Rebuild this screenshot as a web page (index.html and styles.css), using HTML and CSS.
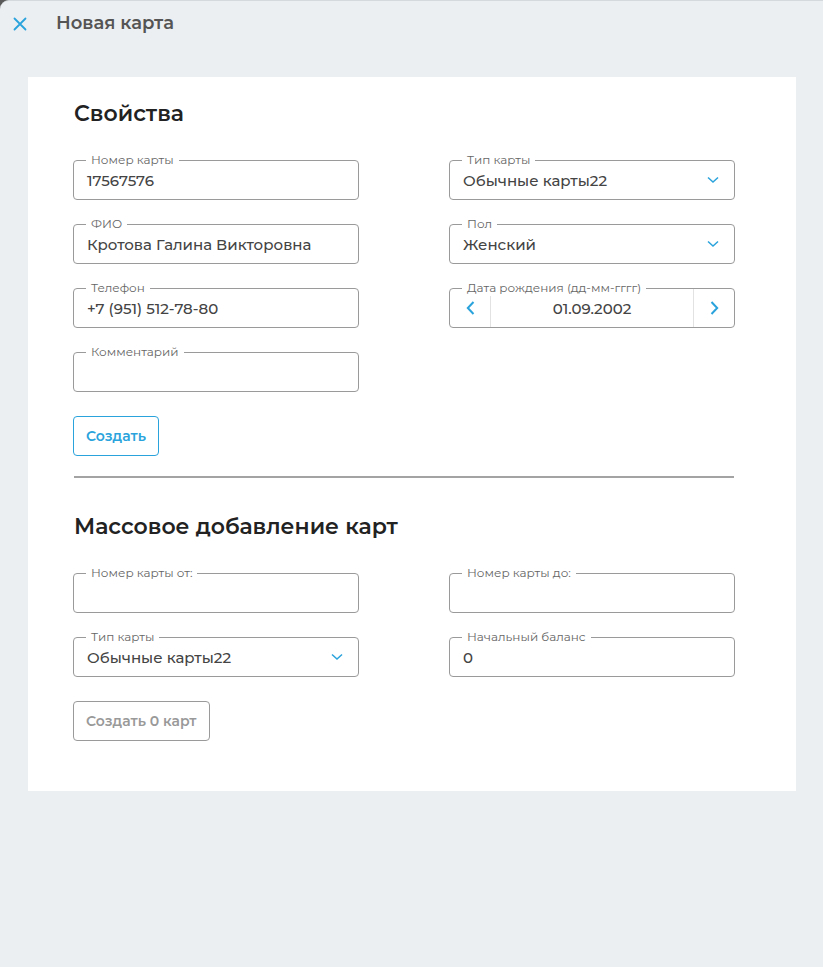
FILE: index.html
```html
<!DOCTYPE html>
<html lang="ru">
<head>
<meta charset="utf-8">
<title>Новая карта</title>
<link rel="stylesheet" href="styles.css">
</head>
<body>
<div class="window">
  <header class="topbar">
    <button class="close" aria-label="Закрыть">
      <svg width="14" height="14" viewBox="0 0 14 14"><path d="M1.5 1.5 L12.5 12.5 M12.5 1.5 L1.5 12.5" stroke="#2aa3dc" stroke-width="1.8" fill="none" stroke-linecap="round"/></svg>
    </button>
    <h1 class="title">Новая карта</h1>
  </header>
  <main class="card">
    <section class="section">
      <h2 class="heading">Свойства</h2>
      <div class="grid">
        <div class="col">
          <div class="field"><span class="label">Номер карты</span><span class="value">17567576</span></div>
          <div class="field"><span class="label">ФИО</span><span class="value">Кротова Галина Викторовна</span></div>
          <div class="field"><span class="label">Телефон</span><span class="value">+7 (951) 512-78-80</span></div>
          <div class="field"><span class="label">Комментарий</span><span class="value"></span></div>
        </div>
        <div class="col">
          <div class="field select"><span class="label">Тип карты</span><span class="value">Обычные карты22</span>
            <svg class="chev" width="12" height="8" viewBox="0 0 12 8"><path d="M1 1.5 L6 6 L11 1.5" stroke="#2aa3dc" stroke-width="1.5" fill="none"/></svg></div>
          <div class="field select"><span class="label">Пол</span><span class="value">Женский</span>
            <svg class="chev" width="12" height="8" viewBox="0 0 12 8"><path d="M1 1.5 L6 6 L11 1.5" stroke="#2aa3dc" stroke-width="1.5" fill="none"/></svg></div>
          <div class="field date"><span class="label">Дата рождения (дд-мм-гггг)</span>
            <span class="step step-prev"><svg width="9" height="14" viewBox="0 0 9 14"><path d="M7.5 1 L1.8 7 L7.5 13" stroke="#2aa3dc" stroke-width="2" fill="none"/></svg></span>
            <span class="date-value">01.09.2002</span>
            <span class="step step-next"><svg width="9" height="14" viewBox="0 0 9 14"><path d="M1.5 1 L7.2 7 L1.5 13" stroke="#2aa3dc" stroke-width="2" fill="none"/></svg></span>
          </div>
        </div>
      </div>
      <button class="btn primary">Создать</button>
    </section>
    <hr class="divider">
    <section class="section">
      <h2 class="heading">Массовое добавление карт</h2>
      <div class="grid">
        <div class="col">
          <div class="field"><span class="label">Номер карты от:</span><span class="value"></span></div>
          <div class="field select"><span class="label">Тип карты</span><span class="value">Обычные карты22</span>
            <svg class="chev" width="12" height="8" viewBox="0 0 12 8"><path d="M1 1.5 L6 6 L11 1.5" stroke="#2aa3dc" stroke-width="1.5" fill="none"/></svg></div>
        </div>
        <div class="col">
          <div class="field"><span class="label">Номер карты до:</span><span class="value"></span></div>
          <div class="field"><span class="label">Начальный баланс</span><span class="value">0</span></div>
        </div>
      </div>
      <button class="btn disabled">Создать 0 карт</button>
    </section>
  </main>
</div>
</body>
</html>
```
FILE: styles.css
```css
* { box-sizing: border-box; }
html, body { margin: 0; padding: 0; height: 100%; }
body {
  background: #5a5a5a;
  font-family: "Montserrat", "Noto Sans", "Open Sans", sans-serif;
}
.window {
  min-height: 967px;
  background: #ebeff2;
  border-top: 1px solid #d3d9dd;
  border-top-left-radius: 9px;
}
.topbar {
  display: flex;
  align-items: center;
  height: 44px;
  padding-left: 13px;
}
.close {
  border: 0;
  background: none;
  padding: 0;
  width: 14px;
  height: 14px;
  display: flex;
  margin-top: 1px;
}
.title {
  margin: 0 0 0 29px;
  font-size: 18px;
  font-weight: 600;
  color: #555;
}
.card {
  background: #fff;
  margin: 32px 27px 0 28px;
  height: 714px;
  padding: 21px 62px 0 45px;
}
.heading {
  margin: 0 0 30px 1px;
  font-size: 22px;
  font-weight: 600;
  color: #222;
  line-height: 32px;
}
.grid {
  display: grid;
  grid-template-columns: 286px 286px;
  column-gap: 90px;
}
.col {
  display: flex;
  flex-direction: column;
  gap: 24px;
}
.field {
  position: relative;
  height: 40px;
  border: 1px solid #9a9a9a;
  border-radius: 4px;
  display: flex;
  align-items: center;
  padding: 0 13px;
}
.label {
  position: absolute;
  left: 12px;
  top: -9px;
  background: #fff;
  padding: 0 5px;
  font-size: 12px;
  line-height: 16px;
  color: #666;
}
.value {
  font-size: 15px;
  font-weight: 500;
  color: #444;
  margin-top: 1px;
}
.select { justify-content: space-between; }
.chev { margin-right: 2px; }
.date { padding: 0; }
.step {
  width: 41px;
  height: 100%;
  display: flex;
  align-items: center;
  justify-content: center;
}
.step-prev { border-right: 1px solid #e2e2e2; }
.step-next { border-left: 1px solid #e2e2e2; }
.date-value {
  flex: 1;
  text-align: center;
  font-size: 15px;
  font-weight: 500;
  color: #444;
  margin-top: 1px;
}
.btn {
  margin-top: 24px;
  height: 40px;
  padding: 0 12px;
  border-radius: 4px;
  background: #fff;
  font-family: inherit;
  font-size: 14px;
  font-weight: 600;
}
.primary { border: 1px solid #2aa3dc; color: #2aa3dc; }
.disabled { border: 1px solid #9a9a9a; color: #999; }
.divider {
  margin: 20px 0 0 1px;
  border: 0;
  height: 2px;
  background: #a3a3a3;
}
.divider + .section { padding-top: 33px; }
```
